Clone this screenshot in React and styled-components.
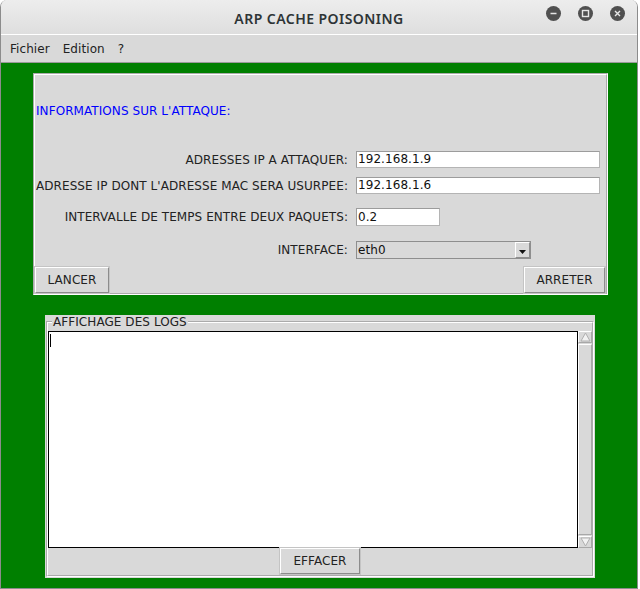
import React from 'react';
import styled, { createGlobalStyle } from 'styled-components';

const GlobalStyle = createGlobalStyle`
  html, body {
    margin: 0;
    padding: 0;
    background: #ffffff;
  }
  body {
    font-family: "DejaVu Sans", "Liberation Sans", sans-serif;
    font-size: 12px;
    letter-spacing: 0.07px;
    color: #222;
  }
`;

const Window = styled.div`
  width: 638px;
  height: 589px;
  box-sizing: border-box;
  border: 1px solid #8c8c8c;
  border-top: none;
  border-radius: 7px 7px 0 0;
  overflow: hidden;
  display: flex;
  flex-direction: column;
`;

const TitleBar = styled.div`
  height: 34px;
  flex: none;
  display: grid;
  grid-template-columns: 1fr auto 1fr;
  align-items: center;
  background: linear-gradient(#ededed, #dedede);
  border-bottom: 1px solid #ffffff;
`;

const Title = styled.div`
  font-family: "Noto Sans", "DejaVu Sans", sans-serif;
  font-size: 14px;
  font-weight: 600;
  color: #2e3436;
  padding-top: 2px;
  letter-spacing: 0.45px;
`;

const Controls = styled.div`
  justify-self: end;
  align-self: start;
  margin-top: 6px;
  margin-right: 12px;
  display: flex;
  gap: 17px;
`;

const CtrlButton = styled.div`
  width: 15px;
  height: 15px;
  border-radius: 50%;
  background: #505050;
  display: flex;
  align-items: center;
  justify-content: center;
  svg {
    display: block;
  }
`;

const MenuBar = styled.div`
  height: 27px;
  flex: none;
  display: flex;
  align-items: center;
  gap: 13px;
  padding-left: 9px;
  background: #d9d9d9;
  border-bottom: 1px solid #9a9a9a;
`;

const MenuItem = styled.span`
  color: #222;
  font-size: 12px;
`;

const Content = styled.div`
  flex: 1;
  background: #007f00;
  padding: 10px 0 0 32px;
  display: flex;
  flex-direction: column;
  align-items: flex-start;
`;

const AttackPanel = styled.div`
  width: 575px;
  height: 222px;
  box-sizing: border-box;
  background: #d9d9d9;
  border: 2px groove #ffffff;
  display: flex;
  flex-direction: column;
`;

const Heading = styled.div`
  color: #0000ff;
  line-height: 16px;
  margin-top: 28px;
  padding-left: 1px;
`;

const FieldRow = styled.div`
  display: grid;
  grid-template-columns: 313px 1fr;
  column-gap: 8px;
  align-items: center;
  margin-top: ${p => p.$mt}px;
`;

const Label = styled.label`
  text-align: right;
  white-space: nowrap;
  color: #222;
`;

const TextField = styled.div`
  width: ${p => p.$w}px;
  height: ${p => p.$h || 17}px;
  box-sizing: border-box;
  background: #ffffff;
  border: 1px solid #b4b4b4;
  border-top-color: #9c9c9c;
  border-left-color: #9c9c9c;
  padding-left: 1px;
  line-height: ${p => (p.$h || 17) - 2}px;
  color: #111;
`;

const Combo = styled.div`
  width: 175px;
  height: 18px;
  box-sizing: border-box;
  border: 1px solid #8e8e8e;
  background: #d9d9d9;
  display: flex;
  align-items: stretch;
`;

const ComboValue = styled.div`
  flex: 1;
  padding-left: 1px;
  line-height: 16px;
  color: #111;
`;

const ComboArrow = styled.div`
  width: 15px;
  box-sizing: border-box;
  border: 1px solid;
  border-color: #ffffff #8e8e8e #8e8e8e #ffffff;
  display: flex;
  align-items: center;
  justify-content: center;
  padding-top: 3px;
`;

const ButtonRow = styled.div`
  display: flex;
  justify-content: space-between;
  margin-top: 8px;
  padding-right: 1px;
`;

const Button = styled.div`
  width: ${p => p.$w}px;
  height: 26px;
  box-sizing: border-box;
  border: 1px solid;
  border-color: #ffffff #8c8c8c #8c8c8c #ffffff;
  box-shadow: 0 0 0 1px #c4c4c4;
  background: #d9d9d9;
  display: flex;
  align-items: center;
  justify-content: center;
  color: #222;
`;

const LogPanel = styled.div`
  margin: 20px 0 0 12px;
  width: 550px;
  height: 263px;
  box-sizing: border-box;
  background: #d9d9d9;
  padding: 0 1px 1px 1px;
  display: flex;
`;

const LogFieldset = styled.fieldset`
  flex: 1;
  margin: 0;
  padding: 2px 0 1px 0;
  min-width: 0;
  border: 2px groove #ffffff;
  display: flex;
  flex-direction: column;
  align-items: center;
`;

const Legend = styled.legend`
  margin-left: 4px;
  padding: 0 1px;
  line-height: 14px;
  color: #222;
`;

const ScrollPane = styled.div`
  align-self: stretch;
  height: 217px;
  display: flex;
`;

const LogArea = styled.div`
  flex: 1;
  background: #ffffff;
  border: 1px solid #000000;
  padding: 2px 0 0 1px;
`;

const Caret = styled.span`
  display: block;
  width: 1px;
  height: 13px;
  background: #000;
`;

const ScrollBar = styled.div`
  width: 14px;
  display: flex;
  flex-direction: column;
  background: #d9d9d9;
`;

const ScrollArrow = styled.div`
  height: 12px;
  box-sizing: border-box;
  border: 1px solid;
  border-color: #ffffff #a8a8a8 #a8a8a8 #ffffff;
  display: flex;
  align-items: center;
  justify-content: center;
`;

const ScrollThumb = styled.div`
  flex: 1;
  box-sizing: border-box;
  border: 1px solid;
  border-color: #ffffff #a8a8a8 #a8a8a8 #ffffff;
  margin: 1px 0;
`;

const ArrowUp = () => (
  <svg width="11" height="10" viewBox="0 0 11 10">
    <path d="M5.5 1 L10 9 L1 9 Z" fill="#f2f2f2" stroke="#b0b0b0" strokeWidth="1" />
  </svg>
);

const ArrowDown = () => (
  <svg width="11" height="10" viewBox="0 0 11 10">
    <path d="M1 1 L10 1 L5.5 9 Z" fill="#f2f2f2" stroke="#b0b0b0" strokeWidth="1" />
  </svg>
);

export default function App() {
  return (
    <>
      <GlobalStyle />
      <Window>
        <TitleBar>
          <span />
          <Title>ARP CACHE POISONING</Title>
          <Controls>
            <CtrlButton>
              <svg width="9" height="9" viewBox="0 0 9 9">
                <path d="M1.5 4.5 H7.5" stroke="#e6e6e6" strokeWidth="1.6" />
              </svg>
            </CtrlButton>
            <CtrlButton>
              <svg width="9" height="9" viewBox="0 0 9 9">
                <rect x="1.5" y="1.5" width="6" height="6" fill="none" stroke="#e6e6e6" strokeWidth="1.4" />
              </svg>
            </CtrlButton>
            <CtrlButton>
              <svg width="9" height="9" viewBox="0 0 9 9">
                <path d="M2 2 L7 7 M7 2 L2 7" stroke="#e6e6e6" strokeWidth="1.4" />
              </svg>
            </CtrlButton>
          </Controls>
        </TitleBar>

        <MenuBar>
          <MenuItem>Fichier</MenuItem>
          <MenuItem>Edition</MenuItem>
          <MenuItem>?</MenuItem>
        </MenuBar>

        <Content>
          <AttackPanel>
            <Heading>INFORMATIONS SUR L'ATTAQUE:</Heading>

            <FieldRow $mt={32}>
              <Label>ADRESSES IP A ATTAQUER:</Label>
              <TextField $w={244}>192.168.1.9</TextField>
            </FieldRow>
            <FieldRow $mt={9}>
              <Label>ADRESSE IP DONT L'ADRESSE MAC SERA USURPEE:</Label>
              <TextField $w={244}>192.168.1.6</TextField>
            </FieldRow>
            <FieldRow $mt={14}>
              <Label>INTERVALLE DE TEMPS ENTRE DEUX PAQUETS:</Label>
              <TextField $w={84} $h={18}>0.2</TextField>
            </FieldRow>
            <FieldRow $mt={15}>
              <Label>INTERFACE:</Label>
              <Combo>
                <ComboValue>eth0</ComboValue>
                <ComboArrow>
                  <svg width="7" height="4" viewBox="0 0 7 4">
                    <path d="M0 0 H7 L3.5 4 Z" fill="#111" />
                  </svg>
                </ComboArrow>
              </Combo>
            </FieldRow>

            <ButtonRow>
              <Button $w={74}>LANCER</Button>
              <Button $w={81}>ARRETER</Button>
            </ButtonRow>
          </AttackPanel>

          <LogPanel>
            <LogFieldset>
              <Legend>AFFICHAGE DES LOGS</Legend>
              <ScrollPane>
                <LogArea>
                  <Caret />
                </LogArea>
                <ScrollBar>
                  <ScrollArrow><ArrowUp /></ScrollArrow>
                  <ScrollThumb />
                  <ScrollArrow><ArrowDown /></ScrollArrow>
                </ScrollBar>
              </ScrollPane>
              <Button $w={80}>EFFACER</Button>
            </LogFieldset>
          </LogPanel>
        </Content>
      </Window>
    </>
  );
}
